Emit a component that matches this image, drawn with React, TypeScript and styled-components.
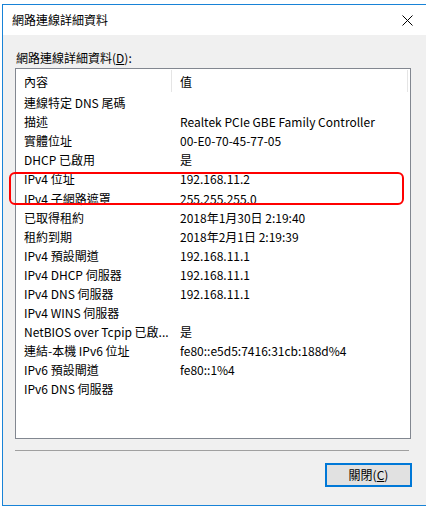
import styled, { createGlobalStyle } from 'styled-components';

const Global = createGlobalStyle`
  html, body {
    margin: 0;
    padding: 0;
    background: #ffffff;
  }
  body {
    font-family: "Noto Sans CJK TC", "Noto Sans", sans-serif;
    font-size: 12px;
    color: #000;
  }
`;

const Window = styled.div`
  margin: 4px 0 0 2px;
  height: 500px;
  border: 1px solid #1883d7;
  border-right: none;
  background: #f0f0f0;
  display: flex;
  flex-direction: column;
`;

const TitleBar = styled.div`
  height: 30px;
  background: #fff;
  display: flex;
  align-items: center;
  justify-content: space-between;
  padding: 0 13px 0 9px;
`;

const Title = styled.span`
  font-size: 12px;
  line-height: 16px;
`;

const Body = styled.div`
  flex: 1;
  display: flex;
  flex-direction: column;
  padding: 15px 14px 0 12px;
`;

const Label = styled.div`
  line-height: 16px;
  margin-left: 1px;
  margin-bottom: 2px;
`;

const ListWrap = styled.div`
  position: relative;
  width: 396px;
`;

const ListBox = styled.div`
  height: 369px;
  border: 1px solid #828790;
  background: #fff;
  overflow: hidden;
`;

const HeaderRow = styled.div`
  display: flex;
  height: 24px;
  align-items: center;
`;

const HeaderCell = styled.div<{ $w?: number }>`
  position: relative;
  width: ${p => (p.$w ? `${p.$w}px` : 'auto')};
  flex: ${p => (p.$w ? 'none' : 1)};
  padding-left: 8px;
  height: 100%;
  display: flex;
  align-items: center;
  box-sizing: border-box;
  &::after {
    content: '';
    position: absolute;
    right: ${p => (p.$w ? '0' : '2px')};
    top: 1px;
    bottom: 1px;
    width: 1px;
    background: #e5e5e5;
  }
`;

const Row = styled.div`
  display: flex;
  height: 19.1px;
  align-items: center;
  white-space: nowrap;
`;

const Cell = styled.div<{ $w?: number }>`
  width: ${p => (p.$w ? `${p.$w}px` : 'auto')};
  flex: ${p => (p.$w ? 'none' : 1)};
  padding: 0 2px 0 8px;
  box-sizing: border-box;
  overflow: hidden;
  text-overflow: ellipsis;
`;

const Highlight = styled.div`
  position: absolute;
  left: -6px;
  top: 104px;
  width: 395px;
  height: 33px;
  border: 2px solid #ff0000;
  border-radius: 6px;
  box-sizing: border-box;
  pointer-events: none;
`;

const Divider = styled.div`
  width: 394px;
  height: 1px;
  background: #a0a0a0;
  margin-top: 11px;
`;

const Footer = styled.div`
  display: flex;
  justify-content: flex-end;
  margin-top: 12px;
`;

const Button = styled.button`
  width: 87px;
  height: 24px;
  border: 2px solid #0078d7;
  background: #e1e1e1;
  font-family: inherit;
  font-size: 12px;
  color: #000;
  padding: 0;
  line-height: 18px;
`;

const col1 = 156;

const rows: [string, string][] = [
  ['連線特定 DNS 尾碼', ''],
  ['描述', 'Realtek PCIe GBE Family Controller'],
  ['實體位址', '00-E0-70-45-77-05'],
  ['DHCP 已啟用', '是'],
  ['IPv4 位址', '192.168.11.2'],
  ['IPv4 子網路遮罩', '255.255.255.0'],
  ['已取得租約', '2018年1月30日 2:19:40'],
  ['租約到期', '2018年2月1日 2:19:39'],
  ['IPv4 預設閘道', '192.168.11.1'],
  ['IPv4 DHCP 伺服器', '192.168.11.1'],
  ['IPv4 DNS 伺服器', '192.168.11.1'],
  ['IPv4 WINS 伺服器', ''],
  ['NetBIOS over Tcpip 已啟...', '是'],
  ['連結-本機 IPv6 位址', 'fe80::e5d5:7416:31cb:188d%4'],
  ['IPv6 預設閘道', 'fe80::1%4'],
  ['IPv6 DNS 伺服器', ''],
];

const CloseIcon = () => (
  <svg width="11" height="11" viewBox="0 0 11 11">
    <path d="M0.5 0.5 L10.5 10.5 M10.5 0.5 L0.5 10.5" stroke="#000" strokeWidth="1" fill="none" />
  </svg>
);

export default function App() {
  return (
    <>
      <Global />
      <Window>
        <TitleBar>
          <Title>網路連線詳細資料</Title>
          <CloseIcon />
        </TitleBar>
        <Body>
          <Label>
            網路連線詳細資料(<u>D</u>):
          </Label>
          <ListWrap>
            <ListBox>
              <HeaderRow>
                <HeaderCell $w={col1}>內容</HeaderCell>
                <HeaderCell>值</HeaderCell>
              </HeaderRow>
              {rows.map(([k, v]) => (
                <Row key={k}>
                  <Cell $w={col1}>{k}</Cell>
                  <Cell>{v}</Cell>
                </Row>
              ))}
            </ListBox>
            <Highlight />
          </ListWrap>
          <Divider />
          <Footer>
            <Button>
              關閉(<u>C</u>)
            </Button>
          </Footer>
        </Body>
      </Window>
    </>
  );
}
